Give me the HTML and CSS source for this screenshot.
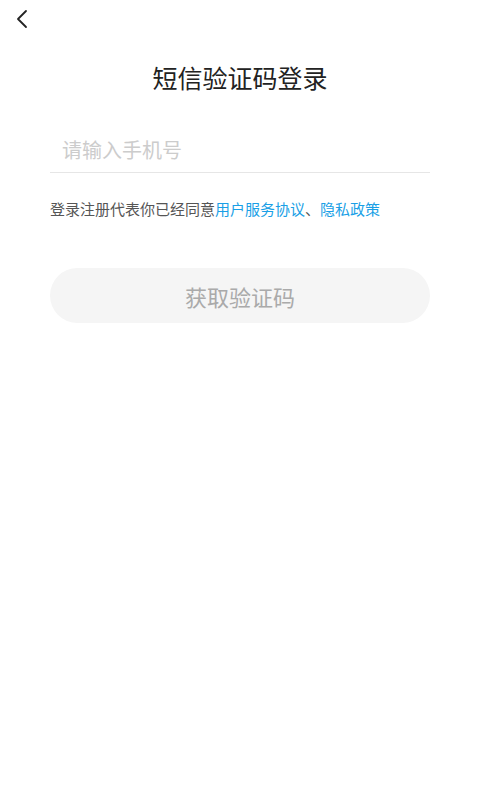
FILE: index.html
```html
<!DOCTYPE html>
<html lang="zh-CN">
<head>
    <meta charset="UTF-8">
    <meta name="viewport" content="width=device-width, initial-scale=1.0">
    <title>短信验证码登录</title>
    <link rel="stylesheet" href="styles.css">
</head>
<body>
    <div class="top-bar">
        <button class="back-btn" aria-label="返回">
            <svg width="14" height="20" viewBox="0 0 14 20">
                <path d="M11 2 L3 10 L11 18" fill="none" stroke="#222" stroke-width="1.8" stroke-linecap="round" stroke-linejoin="round"/>
            </svg>
        </button>
    </div>

    <div class="login">
        <h1>短信验证码登录</h1>

        <div class="field">
            <input type="tel" placeholder="请输入手机号">
        </div>

        <p class="agree">登录注册代表你已经同意<a href="#">用户服务协议</a>、<a href="#">隐私政策</a></p>

        <button class="code-btn">获取验证码</button>
    </div>
</body>
</html>
```

FILE: styles.css
```css
* {
    margin: 0;
    padding: 0;
    box-sizing: border-box;
    font-family: "Noto Sans CJK SC", "Noto Sans", sans-serif;
}

body {
    background-color: #fff;
    width: 480px;
    min-height: 800px;
}

.top-bar {
    height: 40px;
    padding: 8px 0 0 12px;
}

.back-btn {
    background: none;
    border: none;
    width: 20px;
    height: 22px;
    display: flex;
    align-items: center;
    justify-content: center;
}

.login {
    padding: 0 50px;
}

h1 {
    text-align: center;
    font-size: 25px;
    font-weight: 400;
    color: #222;
    line-height: 36px;
    margin-top: 19px;
}

.field {
    margin-top: 31px;
    border-bottom: 1px solid #e6e6e6;
    padding: 0 12px;
    height: 47px;
    display: flex;
    align-items: center;
}

.field input {
    border: none;
    outline: none;
    width: 100%;
    font-size: 20px;
    color: #333;
    background: transparent;
}

.field input::placeholder {
    color: #cccccc;
}

.agree {
    margin-top: 25px;
    font-size: 15px;
    color: #555;
    line-height: 22px;
}

.agree a {
    color: #1a9fe6;
    text-decoration: none;
}

.code-btn {
    display: block;
    width: 100%;
    height: 55px;
    margin-top: 48px;
    border: none;
    border-radius: 28px;
    background-color: #f5f5f5;
    color: #aaaaaa;
    font-size: 22px;
}
```
